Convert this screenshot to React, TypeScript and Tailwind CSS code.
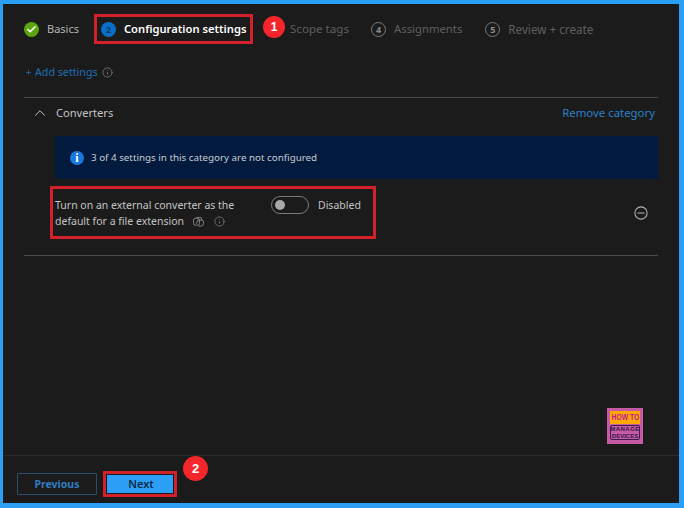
import { Check, ChevronUp, Info, Plus } from "lucide-react";

const font = "font-['Noto_Sans','Open_Sans',sans-serif]";

const Step = ({ n, label, size }: { n: number; label: string; size: string }) => (
  <div className="flex items-center gap-[8px]">
    <span className="flex h-[15px] w-[15px] items-center justify-center rounded-full border border-[#7a7a7a] text-[9px] font-bold leading-none text-[#8a8a8a]">
      {n}
    </span>
    <span className={`${size} whitespace-nowrap leading-4 text-[#5f5f5f]`}>{label}</span>
  </div>
);

export default function App() {
  return (
    <div className={`${font} flex h-[508px] w-[684px] flex-col border-t-4 border-r-[5px] border-b-[5px] border-l-[3px] border-[#2b9ff5] bg-[#1b1b1b]`}>
      <div className="flex-1">
        {/* wizard steps */}
        <div className="flex h-[50px] items-center pl-[21px]">
          <div className="flex items-center gap-[8px]">
            <span className="flex h-[15px] w-[15px] items-center justify-center rounded-full bg-[#5ea50f]">
              <Check className="h-[11px] w-[11px] text-white" strokeWidth={3.5} />
            </span>
            <span className="text-[11px] leading-4 text-[#b5b5b5]">Basics</span>
          </div>
          <div className="ml-[15px] flex h-[30px] w-[159px] items-center gap-[8px] border-[3px] border-[#d3202a] pl-[4px]">
            <span className="flex h-[15px] w-[15px] items-center justify-center rounded-full bg-[#0a6fc9] text-[9px] font-bold leading-none text-[#0c3a66]">
              2
            </span>
            <span className="whitespace-nowrap text-[11.2px] font-semibold leading-4 text-white">Configuration settings</span>
          </div>
          <span className="mb-[4px] ml-[10px] flex h-[22px] w-[22px] items-center justify-center rounded-full bg-[#f4262b] font-['Liberation_Sans',sans-serif] text-[12px] font-bold leading-none text-white">
            1
          </span>
          <span className="ml-[5px] whitespace-nowrap text-[11.6px] leading-4 text-[#5f5f5f]">Scope tags</span>
          <div className="ml-[22px]">
            <Step n={4} label="Assignments" size="text-[11.3px]" />
          </div>
          <div className="ml-[23px]">
            <Step n={5} label="Review + create" size="text-[11.7px]" />
          </div>
        </div>

        {/* add settings */}
        <div className="mt-[10px] flex h-4 items-center pl-[22px] text-[10.7px] leading-4 text-[#1f6fb5]">
          <Plus className="mr-[3px] h-[7px] w-[7px]" strokeWidth={2.5} />
          <span>Add settings</span>
          <Info className="ml-[4px] h-[11px] w-[11px] text-[#8a8a8a]" strokeWidth={1.5} />
        </div>

        {/* category */}
        <div className="mx-[21px] mt-[17px] border-y border-[#4a4a4a] pb-[16px]">
          <div className="flex h-[31px] items-center justify-between pb-[1px] pl-[7px] pr-[3px]">
            <div className="flex items-center gap-[7px]">
              <ChevronUp className="h-[18px] w-[18px] text-[#c8c8c8]" strokeWidth={1.3} />
              <span className="text-[11.1px] leading-4 text-[#c4c4c4]">Converters</span>
            </div>
            <span className="text-[11.4px] leading-4 text-[#2a80c8]">Remove category</span>
          </div>
          <div className="mt-[7px] ml-[31px] flex h-[43px] items-center gap-[7px] bg-[#011a3e] pl-[15px]">
            <span className="flex h-[14px] w-[14px] items-center justify-center rounded-full bg-[#1a78dc] font-['Liberation_Serif',serif] text-[12px] font-bold leading-none text-white">
              i
            </span>
            <span className="text-[9.8px] leading-4 text-[#c8ccd2]">3 of 4 settings in this category are not configured</span>
          </div>
          <div className="mt-[7px] flex items-center">
            <div className="ml-[26px] flex h-[53px] w-[326px] border-[3px] border-[#d3202a] pl-[2px] pt-[9px]">
              <div className="w-[216px] text-[10.5px] leading-[15.5px] text-[#c4c4c4]">
                <div className="whitespace-nowrap">Turn on an external converter as the</div>
                <div className="flex items-center whitespace-nowrap">
                  default for a file extension
                  <svg viewBox="0 0 12 12" className="ml-[9px] h-[11px] w-[11px] text-[#8a8a8a]" fill="none" stroke="currentColor" strokeWidth="1">
                    <path d="M3.5 1.5h4a2 2 0 0 1 2 2v1" />
                    <path d="M5 4.5h4.5a2 2 0 0 1 2 2V8a3 3 0 0 1-3 3H6" />
                    <rect x="0.5" y="2.5" width="6.5" height="7.5" rx="2" />
                    <path d="M5.5 4.5L3.5 8.5" />
                  </svg>
                  <Info className="ml-[10px] h-[11px] w-[11px] text-[#8a8a8a]" strokeWidth={1.5} />
                </div>
              </div>
              <div className="-mt-[2px] flex h-[18px] items-center">
                <span className="flex h-[18px] w-[38px] items-center rounded-full border border-[#7a7a7a] pl-[3px]">
                  <span className="h-[10px] w-[10px] rounded-full bg-[#a8a8a8]" />
                </span>
                <span className="ml-[9px] text-[10.5px] leading-4 text-[#c4c4c4]">Disabled</span>
              </div>
            </div>
            <svg viewBox="0 0 16 16" className="ml-[258px] mt-[1px] h-[14px] w-[14px] text-[#b4b4b4]" fill="none" stroke="currentColor" strokeWidth="1.2">
              <circle cx="8" cy="8" r="7" />
              <path d="M4 8h8" />
            </svg>
          </div>
        </div>
      </div>

      {/* footer */}
      <div className="relative flex h-[48px] items-start border-t border-[#2c2c2c] pl-[14px]">
        {/* logo */}
        <div className="absolute -top-[48px] left-[604px] flex h-[36px] w-[36px] flex-col items-center border-[3px] border-[#c75aa5] bg-[#c75aa5]">
          <div className="flex h-[13px] w-full items-center justify-center bg-[#ffa800] font-['Liberation_Sans',sans-serif] text-[9px] font-bold leading-none text-[#c0189f]">
            <span className="scale-x-[0.75] whitespace-nowrap">HOW TO</span>
          </div>
          <div className="mt-[1px] flex h-[15px] w-full flex-col items-center justify-center rounded-[2px] border border-[#3a1c4d] font-['Liberation_Sans',sans-serif] text-[6px] font-bold leading-[6.5px] text-[#33174a]">
            <span className="tracking-[0.5px]">MANAGE</span>
            <span>DEVICES</span>
          </div>
        </div>
        <button className="mt-[17px] flex h-[22px] w-[80px] items-center justify-center rounded-[1px] border border-[#2a4f6e] text-[10.5px] font-bold leading-none text-[#2f7cc4]">
          Previous
        </button>
        <div className="ml-[6px] mt-[15px] flex h-[26px] w-[74px] items-center justify-center border-[3px] border-[#d3202a]">
          <button className="-mt-[1px] flex h-[18px] w-[66px] items-center justify-center bg-[#2b9ff5] pl-[2px] text-[11px] font-semibold leading-none text-[#0f2a44]">
            Next
          </button>
        </div>
        <span className="ml-[6px] flex h-[25px] w-[25px] items-center justify-center rounded-full bg-[#f4262b] font-['Liberation_Sans',sans-serif] text-[13px] font-bold leading-none text-white">
          2
        </span>
      </div>
    </div>
  );
}
